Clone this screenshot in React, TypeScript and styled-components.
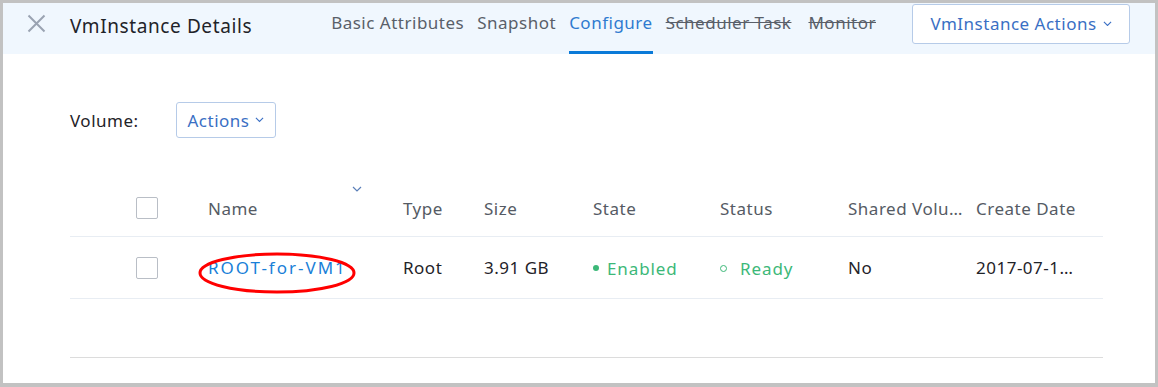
import styled, { createGlobalStyle } from 'styled-components';

const GlobalStyle = createGlobalStyle`
  html, body {
    margin: 0;
    padding: 0;
    background: #fff;
  }
  body {
    font-family: 'Noto Sans', 'Noto Sans CJK SC', sans-serif;
    letter-spacing: 0.5px;
  }
`;

const Frame = styled.div`
  box-sizing: border-box;
  width: 1158px;
  height: 387px;
  border: 3px solid #c2c2c2;
  border-bottom-width: 4px;
  background: #fff;
  position: relative;
  overflow: hidden;
`;

const Header = styled.div`
  height: 51px;
  background: #f0f7fe;
  display: flex;
  align-items: stretch;
  padding: 0 25px 0 23px;
`;

const CloseButton = styled.button`
  align-self: center;
  width: 20px;
  height: 20px;
  padding: 0;
  margin: 0 24px 10px 0;
  border: 0;
  background: transparent;
  display: flex;
  align-items: center;
  justify-content: center;
`;

const Title = styled.h1`
  align-self: center;
  margin: 0 0 6px;
  font-size: 19px;
  font-weight: 400;
  letter-spacing: 0.6px;
  color: #1f2329;
  flex: 1;
`;

const Tabs = styled.nav`
  display: flex;
  gap: 13px;
  margin-right: 32px;
`;

const Tab = styled.div<{ $active?: boolean; $disabled?: boolean }>`
  display: flex;
  align-items: center;
  padding-bottom: 10px;
  font-size: 17px;
  color: ${p => (p.$active ? '#2f7bd0' : '#595f69')};
  text-decoration: ${p => (p.$disabled ? 'line-through' : 'none')};
  border-bottom: 3px solid ${p => (p.$active ? '#0a7ad8' : 'transparent')};
  margin-right: ${p => (p.$disabled ? '4px' : '0')};
`;

const OutlineButton = styled.button<{ $width: number; $height: number }>`
  box-sizing: border-box;
  align-self: center;
  width: ${p => p.$width}px;
  height: ${p => p.$height}px;
  border: 1px solid #b6cbe8;
  border-radius: 3px;
  background: #fff;
  color: #3a6fc4;
  font-family: inherit;
  font-size: 17px;
  letter-spacing: 0.5px;
  display: flex;
  align-items: center;
  justify-content: center;
  gap: 6px;
  padding: 0;
  cursor: pointer;
`;

const HeaderButton = styled(OutlineButton)`
  margin-bottom: 10px;
`;

const Body = styled.div`
  padding: 48px 52px 0 67px;
`;

const Toolbar = styled.div`
  display: flex;
  align-items: center;
`;

const Label = styled.span`
  font-size: 17px;
  color: #1f2329;
  width: 106px;
`;

const Table = styled.div`
  margin-top: 42px;
  border-bottom: 1px solid #dcdcdc;
  padding-bottom: 58px;
`;

const Row = styled.div<{ $head?: boolean }>`
  display: grid;
  grid-template-columns: 126px 195px 81px 109px 127px 128px 128px 139px;
  height: ${p => (p.$head ? '56px' : '61px')};
  align-items: center;
  border-bottom: 1px solid #e8edf3;
  font-size: 17px;
  color: ${p => (p.$head ? '#555b64' : '#1f2329')};
`;

const Cell = styled.div<{ $pr?: number }>`
  padding: 0 ${p => p.$pr ?? 4}px 0 12px;
  white-space: nowrap;
  overflow: hidden;
  text-overflow: ellipsis;
`;

const NameCell = styled.div`
  padding-left: 12px;
  white-space: nowrap;
`;

const CheckCell = styled.div`
  padding-left: 66px;
  display: flex;
`;

const Checkbox = styled.span`
  box-sizing: border-box;
  width: 22px;
  height: 22px;
  border: 1px solid #b9bec6;
  border-radius: 2px;
  background: #fff;
`;

const SortCell = styled.div`
  position: relative;
  padding-left: 12px;
  align-self: stretch;
  display: flex;
  align-items: center;
`;

const SortCaret = styled.span`
  position: absolute;
  right: 29px;
  top: 6px;
  display: flex;
  color: #5b7fb8;
`;

const NameLink = styled.a`
  color: #1a7fd8;
  text-decoration: none;
  letter-spacing: 2px;
  position: relative;
`;

const Status = styled.span<{ $hollow?: boolean }>`
  color: #3cb878;
  display: inline-flex;
  align-items: center;
  gap: ${p => (p.$hollow ? '13px' : '8px')};
  letter-spacing: 0.9px;
  position: relative;
  top: -1px;

  &::before {
    content: '';
    box-sizing: border-box;
    width: ${p => (p.$hollow ? '7px' : '6px')};
    height: ${p => (p.$hollow ? '7px' : '6px')};
    border-radius: 50%;
    background: ${p => (p.$hollow ? 'transparent' : '#3cb878')};
    border: ${p => (p.$hollow ? '1px solid #3cb878' : 'none')};
  }
`;

const Ellipse = styled.svg`
  position: absolute;
  left: -10px;
  top: calc(50% - 16px);
  pointer-events: none;
`;

const Chevron = ({ size = 9 }: { size?: number }) => (
  <svg width={size} height={size * 0.6} viewBox="0 0 10 6">
    <path d="M1 1l4 4 4-4" fill="none" stroke="currentColor" strokeWidth="1.2" />
  </svg>
);

export default function App() {
  return (
    <>
      <GlobalStyle />
      <Frame>
        <Header>
          <CloseButton aria-label="close">
            <svg width="19" height="19" viewBox="0 0 19 19">
              <path d="M1.5 1.5l16 16M17.5 1.5l-16 16" stroke="#9aa3b2" strokeWidth="2" />
            </svg>
          </CloseButton>
          <Title>VmInstance Details</Title>
          <Tabs>
            <Tab>Basic Attributes</Tab>
            <Tab>Snapshot</Tab>
            <Tab $active>Configure</Tab>
            <Tab $disabled>Scheduler Task</Tab>
            <Tab $disabled>Monitor</Tab>
          </Tabs>
          <HeaderButton $width={218} $height={40}>
            VmInstance Actions <Chevron />
          </HeaderButton>
        </Header>
        <Body>
          <Toolbar>
            <Label>Volume:</Label>
            <OutlineButton $width={100} $height={36}>
              Actions <Chevron />
            </OutlineButton>
          </Toolbar>
          <Table>
            <Row $head>
              <CheckCell><Checkbox /></CheckCell>
              <SortCell>
                Name
                <SortCaret><Chevron size={10} /></SortCaret>
              </SortCell>
              <Cell>Type</Cell>
              <Cell>Size</Cell>
              <Cell>State</Cell>
              <Cell>Status</Cell>
              <Cell $pr={0}>Shared Volume</Cell>
              <Cell>Create Date</Cell>
            </Row>
            <Row>
              <CheckCell><Checkbox /></CheckCell>
              <NameCell>
                <NameLink href="#">
                  ROOT-for-VM1
                  <Ellipse width="158" height="42" viewBox="0 0 158 42">
                    <ellipse cx="79" cy="21" rx="77" ry="19" fill="none" stroke="#ff0000" strokeWidth="3" />
                  </Ellipse>
                </NameLink>
              </NameCell>
              <Cell>Root</Cell>
              <Cell>3.91 GB</Cell>
              <Cell><Status>Enabled</Status></Cell>
              <Cell><Status $hollow>Ready</Status></Cell>
              <Cell>No</Cell>
              <Cell $pr={28}>2017-07-12 15:32:08</Cell>
            </Row>
          </Table>
        </Body>
      </Frame>
    </>
  );
}
